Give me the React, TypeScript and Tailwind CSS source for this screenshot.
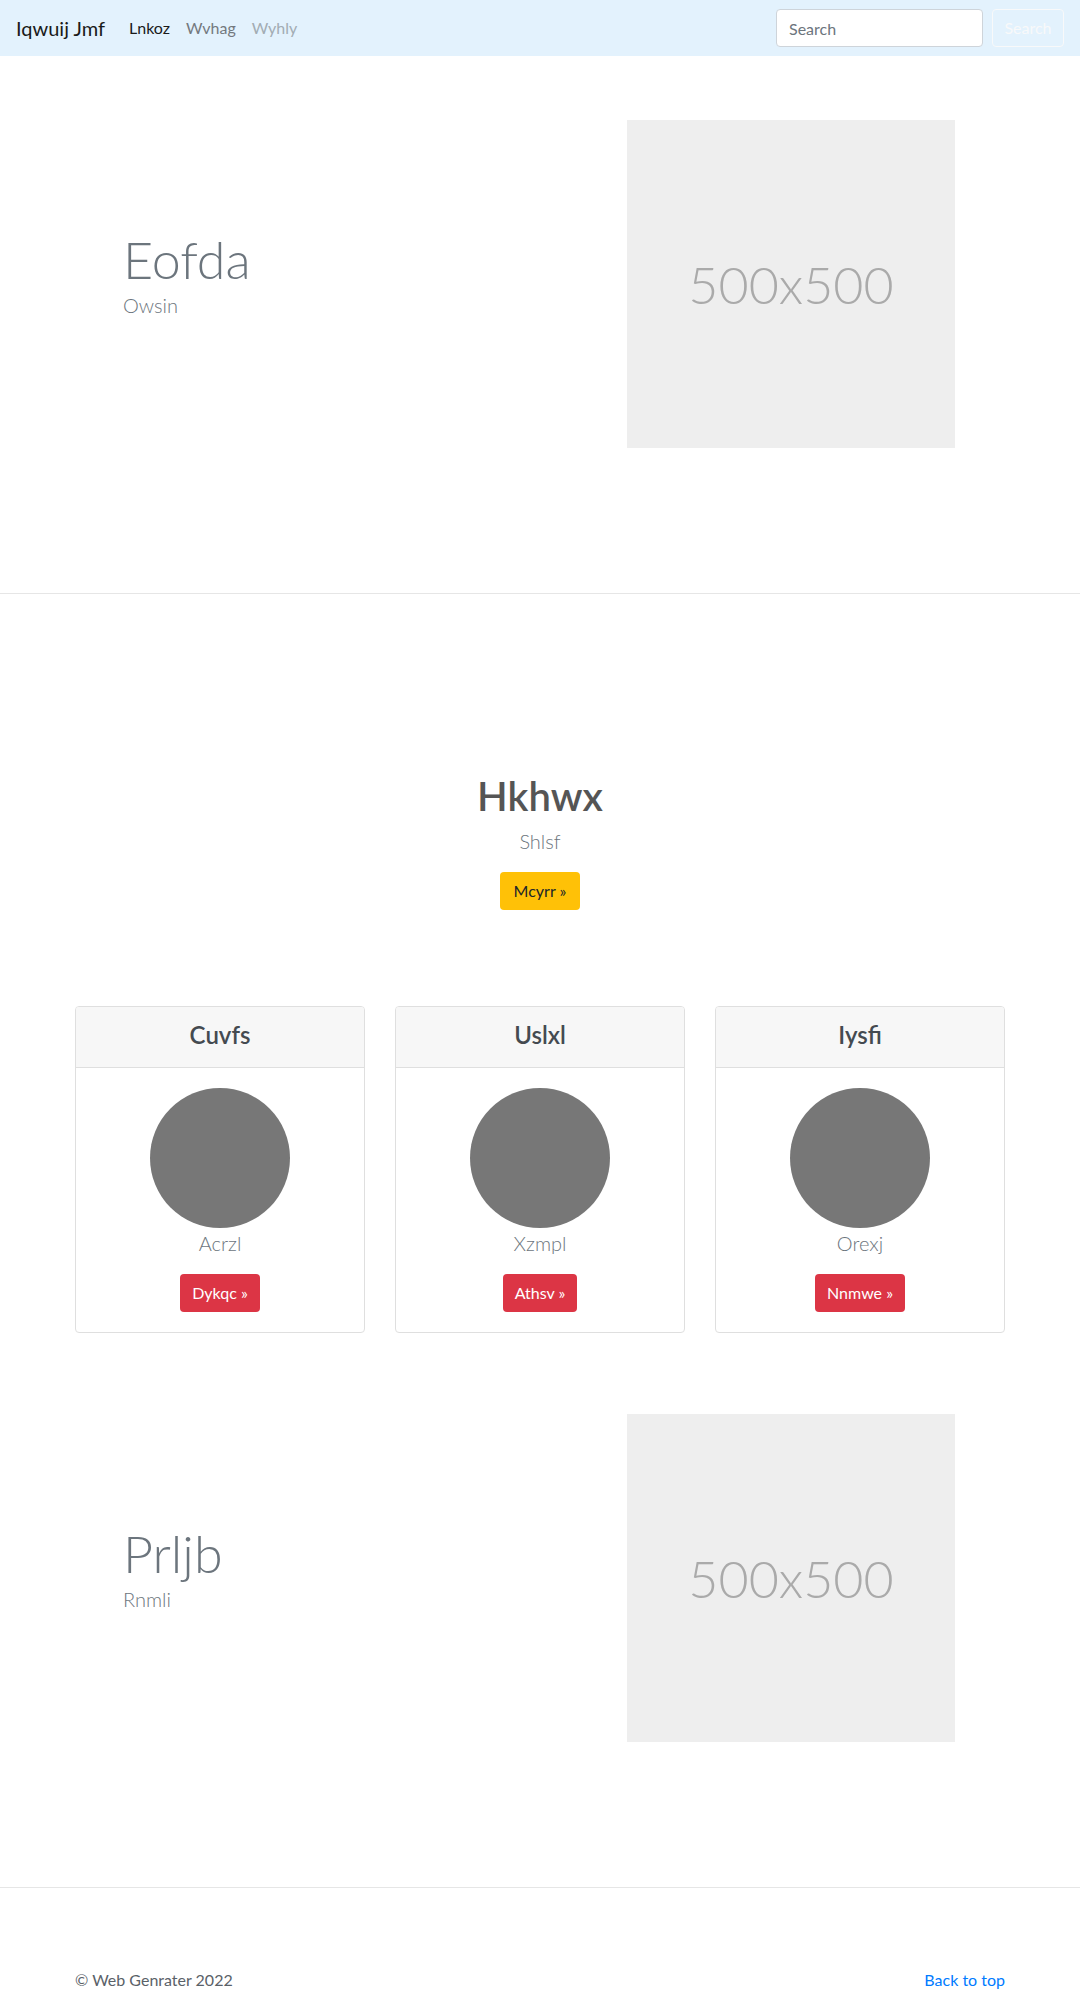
const cards = [
  { title: "Cuvfs", name: "Acrzl", action: "Dykqc" },
  { title: "Uslxl", name: "Xzmpl", action: "Athsv" },
  { title: "Iysfi", name: "Orexj", action: "Nnmwe" },
];

function Navbar() {
  return (
    <nav className="h-[56px] bg-[#e3f2fd] px-4 flex items-center">
      <a href="#" className="text-[20px] text-[#1a1a1a] mr-4">
        Iqwuij Jmf
      </a>
      <a href="#" className="px-2 text-base text-[#1a1a1a]">
        Lnkoz
      </a>
      <a href="#" className="px-2 text-base text-[#73797e]">
        Wvhag
      </a>
      <span className="px-2 text-base text-[#a2acb3]">Wyhly</span>
      <form className="ml-auto flex items-center gap-[9px]">
        <input
          type="text"
          placeholder="Search"
          className="w-[207px] h-[38px] rounded-[4px] border border-[#ced4da] bg-white px-3 text-base text-[#495057] placeholder:text-[#6c757d] outline-none"
        />
        <button
          type="button"
          className="w-[72px] h-[38px] rounded-[4px] border border-[#f8f9fa] text-base text-[#f8f9fa]"
        >
          Search
        </button>
      </form>
    </nav>
  );
}

function Hero({ title, subtitle }: { title: string; subtitle: string }) {
  return (
    <section className="pt-16 pb-[145px]">
      <div className="w-[960px] mx-auto flex items-center">
        <div className="w-[567px] pl-[63px]">
          <h1 className="text-[52px] leading-[1.2] font-light text-[#6c757d]">
            {title}
          </h1>
          <p className="text-[20px] leading-[30px] font-light text-[#6c757d] mb-5">
            {subtitle}
          </p>
        </div>
        <div className="w-[328px] h-[328px] bg-[#eeeeee] flex items-center justify-center">
          <span className="text-[52px] font-light text-[#aaaaaa]">500x500</span>
        </div>
      </div>
    </section>
  );
}

function Pricing() {
  return (
    <section className="pt-[178px] pb-[17px]">
      <div className="text-center">
        <h2 className="text-[40px] leading-[48px] font-semibold text-[#555555] mb-[6px]">
          Hkhwx
        </h2>
        <p className="text-[20px] leading-[30px] font-light text-[#6c757d] mb-4">
          Shlsf
        </p>
        <button
          type="button"
          className="h-[38px] px-[14px] rounded-[4px] bg-[#ffc107] text-base text-[#212529]"
        >
          Mcyrr »
        </button>
      </div>
      <div className="w-[930px] mx-auto mt-[96px] grid grid-cols-3 gap-[30px]">
        {cards.map((card) => (
          <div
            key={card.title}
            className="border border-[#dfdfdf] rounded-[4px] overflow-hidden text-center"
          >
            <div className="h-[61px] pb-1 bg-[#f7f7f7] border-b border-[#dfdfdf] flex items-center justify-center">
              <h4 className="text-[24px] font-semibold text-[#444a50]">
                {card.title}
              </h4>
            </div>
            <div className="pt-5 pb-5">
              <div className="w-[140px] h-[140px] rounded-full bg-[#777777] mx-auto" />
              <p className="text-[20px] leading-[30px] font-light text-[#6c757d] mb-4">
                {card.name}
              </p>
              <button
                type="button"
                className="h-[38px] px-3 rounded-[4px] bg-[#dc3545] text-base text-white"
              >
                {card.action} »
              </button>
            </div>
          </div>
        ))}
      </div>
    </section>
  );
}

export default function App() {
  return (
    <div className="font-['Lato','Open_Sans',sans-serif] bg-white min-h-[1992px]">
      <Navbar />
      <Hero title="Eofda" subtitle="Owsin" />
      <hr className="border-t border-[#e6e6e6]" />
      <Pricing />
      <Hero title="Prljb" subtitle="Rnmli" />
      <hr className="border-t border-[#e6e6e6]" />
      <footer className="w-[930px] mx-auto pt-[80px] pb-12 flex justify-between text-base leading-6">
        <p className="text-[#5a6168]">© Web Genrater 2022</p>
        <a href="#" className="text-[#007bff]">
          Back to top
        </a>
      </footer>
    </div>
  );
}
